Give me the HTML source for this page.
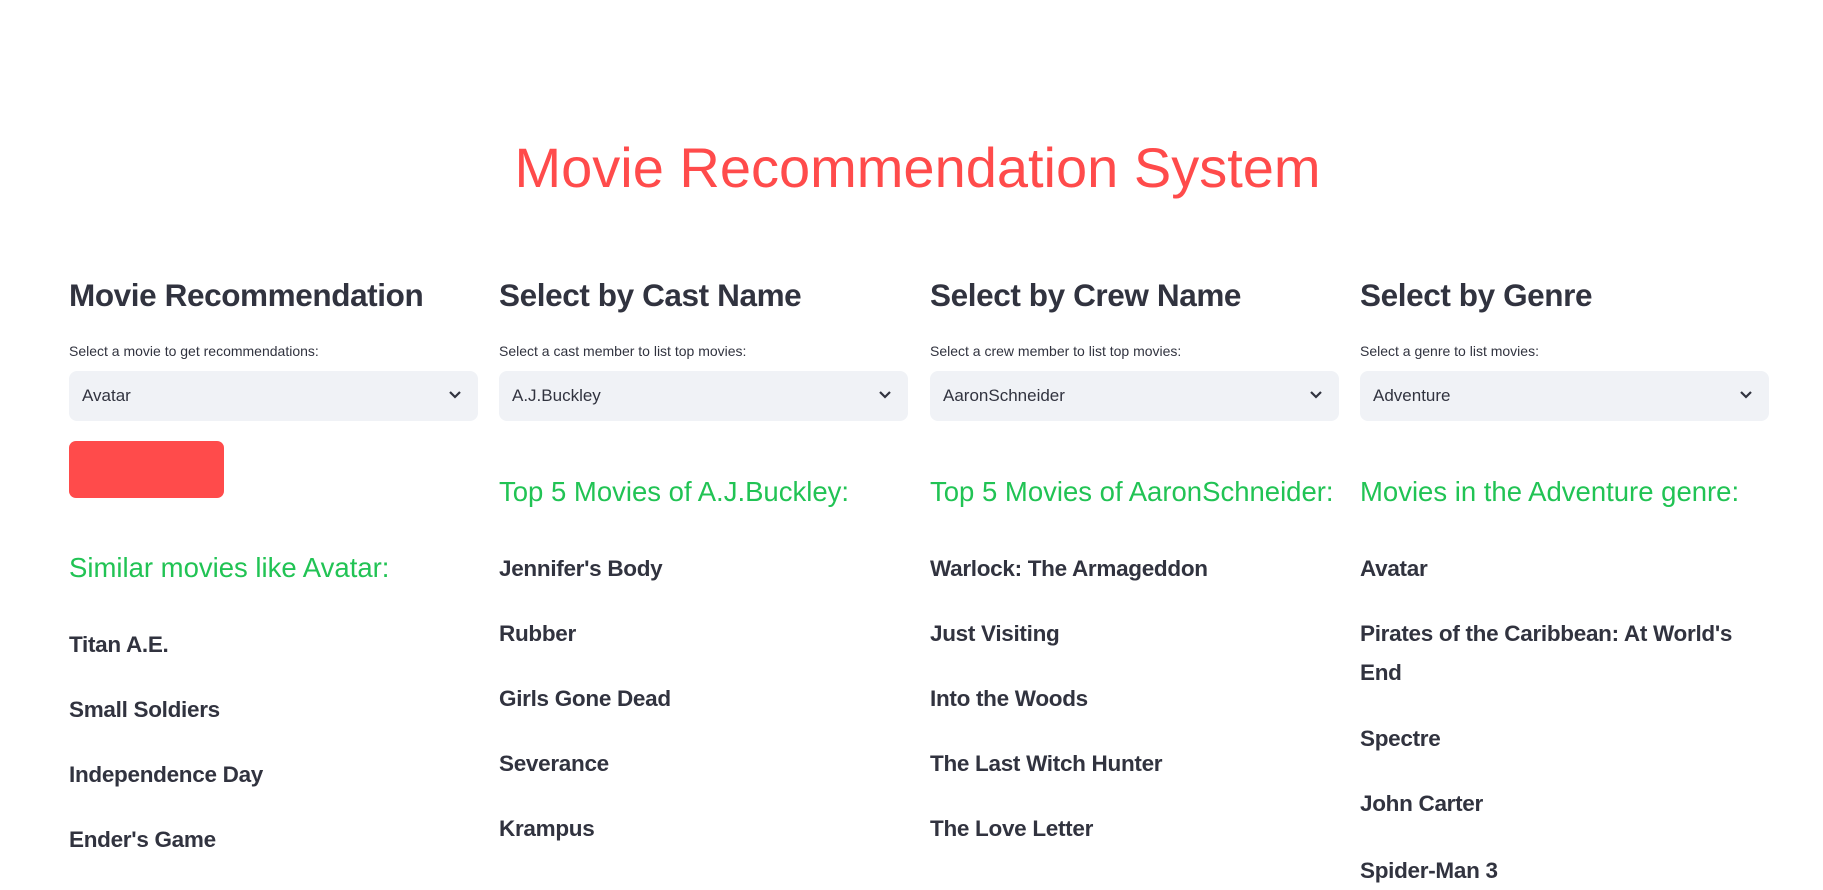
<!DOCTYPE html>
<html><head><meta charset="utf-8"><style>
body{margin:0;width:1823px;height:865px;overflow:hidden;background:#fff;font-family:"Liberation Sans",sans-serif;color:#31333f;position:relative}
.a{position:absolute;white-space:nowrap}
.t{left:0;width:1823px;text-align:center;top:133px;font-size:56px;line-height:70px;color:#ff4b4b;padding-left:12px;box-sizing:border-box}
.h{font-size:31.5px;line-height:40px;font-weight:bold;top:275px;letter-spacing:-0.4px}
.l{font-size:14px;line-height:20px;top:341px}
.s{top:371px;width:409px;height:50px;background:#f0f2f6;border-radius:8px}
.s span{position:absolute;left:13px;top:15px;font-size:17px;line-height:20px}
.s svg{position:absolute;right:16px;top:19px}
.g{font-size:27.5px;line-height:36px;color:#21c354}
.i{font-size:22.5px;line-height:39px;font-weight:bold;letter-spacing:-0.3px}
</style></head><body>
<div class="a t">Movie Recommendation System</div>

<div class="a h" style="left:69px">Movie Recommendation</div>
<div class="a h" style="left:499px">Select by Cast Name</div>
<div class="a h" style="left:930px">Select by Crew Name</div>
<div class="a h" style="left:1360px">Select by Genre</div>

<div class="a l" style="left:69px">Select a movie to get recommendations:</div>
<div class="a l" style="left:499px">Select a cast member to list top movies:</div>
<div class="a l" style="left:930px">Select a crew member to list top movies:</div>
<div class="a l" style="left:1360px">Select a genre to list movies:</div>

<div class="a s" style="left:69px"><span>Avatar</span><svg width="14" height="10" viewBox="0 0 14 10"><path d="M2 2l5 5 5-5" fill="none" stroke="#31333f" stroke-width="2.2"/></svg></div>
<div class="a s" style="left:499px"><span>A.J.Buckley</span><svg width="14" height="10" viewBox="0 0 14 10"><path d="M2 2l5 5 5-5" fill="none" stroke="#31333f" stroke-width="2.2"/></svg></div>
<div class="a s" style="left:930px"><span>AaronSchneider</span><svg width="14" height="10" viewBox="0 0 14 10"><path d="M2 2l5 5 5-5" fill="none" stroke="#31333f" stroke-width="2.2"/></svg></div>
<div class="a s" style="left:1360px"><span>Adventure</span><svg width="14" height="10" viewBox="0 0 14 10"><path d="M2 2l5 5 5-5" fill="none" stroke="#31333f" stroke-width="2.2"/></svg></div>

<div class="a" style="left:69px;top:441px;width:155px;height:57px;background:#ff4b4b;border-radius:7px"></div>

<div class="a g" style="left:69px;top:550px">Similar movies like Avatar:</div>
<div class="a g" style="left:499px;top:474px">Top 5 Movies of A.J.Buckley:</div>
<div class="a g" style="left:930px;top:474px">Top 5 Movies of AaronSchneider:</div>
<div class="a g" style="left:1360px;top:474px">Movies in the Adventure genre:</div>

<div class="a i" style="left:69px;top:625px">Titan A.E.</div>
<div class="a i" style="left:69px;top:690px">Small Soldiers</div>
<div class="a i" style="left:69px;top:755px">Independence Day</div>
<div class="a i" style="left:69px;top:820px">Ender's Game</div>

<div class="a i" style="left:499px;top:549px">Jennifer's Body</div>
<div class="a i" style="left:499px;top:614px">Rubber</div>
<div class="a i" style="left:499px;top:679px">Girls Gone Dead</div>
<div class="a i" style="left:499px;top:744px">Severance</div>
<div class="a i" style="left:499px;top:809px">Krampus</div>

<div class="a i" style="left:930px;top:549px">Warlock: The Armageddon</div>
<div class="a i" style="left:930px;top:614px">Just Visiting</div>
<div class="a i" style="left:930px;top:679px">Into the Woods</div>
<div class="a i" style="left:930px;top:744px">The Last Witch Hunter</div>
<div class="a i" style="left:930px;top:809px">The Love Letter</div>

<div class="a i" style="left:1360px;top:549px">Avatar</div>
<div class="a i" style="left:1360px;top:614px">Pirates of the Caribbean: At World's<br>End</div>
<div class="a i" style="left:1360px;top:719px">Spectre</div>
<div class="a i" style="left:1360px;top:784px">John Carter</div>
<div class="a i" style="left:1360px;top:851px">Spider-Man 3</div>
</body></html>
